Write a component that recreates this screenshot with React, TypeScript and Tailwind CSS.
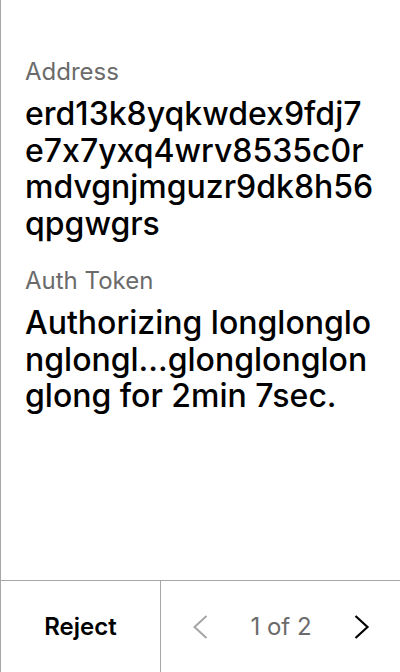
import React from "react";

const ChevronLeft: React.FC<{ className?: string }> = ({ className }) => (
    <svg width="16" height="26" viewBox="0 0 16 26" fill="none" className={className}>
        <path d="M14.5 2 L2.5 13 L14.5 24" stroke="currentColor" strokeWidth="2" />
    </svg>
);

const ChevronRight: React.FC<{ className?: string }> = ({ className }) => (
    <svg width="16" height="26" viewBox="0 0 16 26" fill="none" className={className}>
        <path d="M1.5 2 L13.5 13 L1.5 24" stroke="currentColor" strokeWidth="2.2" />
    </svg>
);

const Field: React.FC<{ label: string; value: string }> = ({ label, value }) => (
    <div className="flex flex-col">
        <p className="text-[24px] leading-[32px] text-[#6b6b6b]">{label}</p>
        <p className="text-[32px] leading-[36.5px] text-black font-medium break-all mt-[8px]">{value}</p>
    </div>
);

export default function App() {
    return (
        <div className="w-[400px] h-[672px] bg-white flex flex-col border-l border-[#a6a6a6] font-['Inter',sans-serif] [font-feature-settings:'calt'_0]">
            <section className="flex-1 flex flex-col gap-[23px] px-6 pt-[56px]">
                <Field label="Address" value="erd13k8yqkwdex9fdj7e7x7yxq4wrv8535c0rmdvgnjmguzr9dk8h56qpgwgrs" />
                <Field label="Auth Token" value="Authorizing longlonglonglongl...glonglonglonglong for 2min 7sec." />
            </section>
            <footer className="h-[92px] flex border-t border-[#a6a6a6]">
                <button className="w-[160px] flex items-center justify-center text-[24px] font-semibold text-black border-r border-[#a6a6a6]">
                    Reject
                </button>
                <div className="flex-1 flex items-center justify-between pl-[31px] pr-[30px]">
                    <ChevronLeft className="text-[#a6a6a6]" />
                    <span className="text-[24px] text-[#6b6b6b]">1 of 2</span>
                    <ChevronRight className="text-black" />
                </div>
            </footer>
        </div>
    );
}
